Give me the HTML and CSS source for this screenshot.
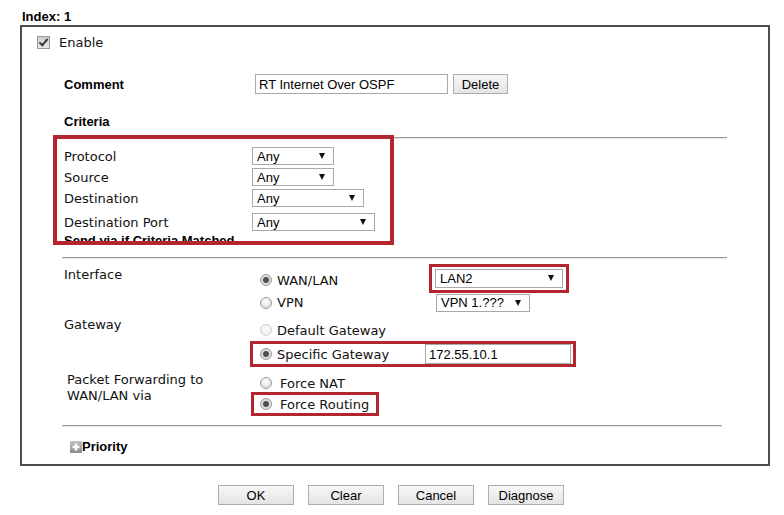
FILE: index.html
```html
<!DOCTYPE html>
<html lang="en">
<head>
    <meta charset="UTF-8">
    <title>Route Policy</title>
    <link rel="stylesheet" href="styles.css">
</head>
<body>
    <div class="title">Index: 1</div>
    <div class="panel">
        <label class="enable"><input type="checkbox" class="check" checked>Enable</label>

        <div class="comment">
            <span class="name">Comment</span>
            <input type="text" class="text" value="RT Internet Over OSPF">
            <button class="btn del">Delete</button>
        </div>

        <div class="heading">Criteria</div>
        <hr>
        <!-- criteria -->
        <div class="mark criteria">
            <span>Protocol</span>
            <span class="pick"><select class="w82"><option>Any</option></select></span>
            <span>Source</span>
            <span class="pick"><select class="w82"><option>Any</option></select></span>
            <span>Destination</span>
            <span class="pick"><select class="w112"><option>Any</option></select></span>
            <span>Destination Port</span>
            <span class="pick"><select class="w123"><option>Any</option></select></span>
        </div>
        <div class="heading sub">Send via if Criteria Matched</div>
        <hr>

        <!-- send via -->
        <div class="route">
            <span class="lbl-iface">Interface</span>
            <label class="opt o-wan"><input type="radio" class="radio" name="iface" checked>WAN/LAN</label>
            <span class="mark lan-box"><span class="pick"><select class="w128 tall"><option>LAN2</option></select></span></span>
            <label class="opt o-vpn"><input type="radio" class="radio" name="iface">VPN</label>
            <span class="pick vpn-pick"><select class="w94"><option>VPN 1.???</option></select></span>

            <span class="lbl-gw">Gateway</span>
            <label class="opt o-def"><input type="radio" class="radio" name="gw" disabled>Default Gateway</label>
            <div class="mark gw-box">
                <label class="opt"><input type="radio" class="radio" name="gw" checked>Specific Gateway</label>
                <input type="text" class="text gw-ip" value="172.55.10.1">
            </div>

            <span class="lbl-fwd">Packet Forwarding to<br>WAN/LAN via</span>
            <label class="opt wide o-nat"><input type="radio" class="radio" name="fwd">Force NAT</label>
            <div class="mark fwd-box">
                <label class="opt wide"><input type="radio" class="radio" name="fwd" checked>Force Routing</label>
            </div>
        </div>
        <hr>

        <div class="priority">
            <svg width="12" height="12" viewBox="0 0 12 12">
                <defs>
                    <linearGradient id="pg" x1="0" y1="0" x2="0" y2="1">
                        <stop offset="0" stop-color="#c4c4c4"/>
                        <stop offset="1" stop-color="#8c8c8c"/>
                    </linearGradient>
                </defs>
                <rect x="0" y="0" width="12" height="12" fill="url(#pg)"/>
                <path d="M6 2.5V9.5M2.5 6H9.5" stroke="#fff" stroke-width="2.4"/>
            </svg>Priority
        </div>
    </div>

    <div class="actions">
        <button class="btn">OK</button>
        <button class="btn">Clear</button>
        <button class="btn">Cancel</button>
        <button class="btn">Diagnose</button>
    </div>
</body>
</html>
```

FILE: styles.css
```css
body{
  margin: 0;
  font-family: "DejaVu Sans", Verdana, sans-serif;
  font-size: 13px;
  color: #111;
  background: #fff;
}
.title{
  height: 25px;
  box-sizing: border-box;
  padding: 9px 0 0 22px;
  font: bold 13px/15px "Liberation Sans", Arial, sans-serif;
  color: #000;
}
/* panel */
.panel{
  margin-left: 20px;
  width: 750px;
  box-sizing: border-box;
  border: 2px solid #4d4d4d;
  padding-bottom: 9px;
}
.enable{
  display: flex;
  align-items: center;
  height: 30px;
  padding-left: 15px;
}
.check{
  -webkit-appearance: none;
  appearance: none;
  position: relative;
  width: 13px;
  height: 13px;
  margin: 0 9px 0 0;
  box-sizing: border-box;
  border: 1px solid #9a9a9a;
  background: linear-gradient(#cfcfcf, #e9e9e9);
}
.check:checked::after{
  content: "";
  position: absolute;
  left: 3px;
  top: 0px;
  width: 3px;
  height: 7px;
  border: solid #3c3c3c;
  border-width: 0 2px 2px 0;
  transform: rotate(40deg);
}
.comment{
  display: flex;
  align-items: center;
  height: 20px;
  margin: 17px 0 0 42px;
}
.name{
  width: 191px;
  font: bold 13px "Liberation Sans", Arial, sans-serif;
  color: #000;
}
.text{
  box-sizing: border-box;
  height: 20px;
  width: 193px;
  margin: 0;
  padding: 0 3px;
  border: 1px solid #a9a9a9;
  font: 13px "Liberation Sans", Arial, sans-serif;
  color: #000;
  outline: none;
}
.btn{
  box-sizing: border-box;
  height: 20px;
  margin: 0;
  padding: 0 6px;
  border: 1px solid #adadad;
  background: linear-gradient(#f7f7f7, #e4e4e4);
  font: 13px "Liberation Sans", Arial, sans-serif;
  color: #000;
}
.del{
  width: 55px;
  margin-left: 5px;
}
.heading{
  margin: 18px 0 0 42px;
  font: bold 13px/20px "Liberation Sans", Arial, sans-serif;
  color: #000;
}
hr{
  margin: 5px 0 0 40px;
  width: 665px;
  height: 0;
  border: 0;
  border-top: 1px solid #9a9a9a;
  border-bottom: 1px solid #e8e8e8;
}
.sub + hr{
  margin-top: 8px;
}
.route + hr{
  margin-top: 9px;
  width: 660px;
}
/* red highlight frames */
.mark{
  border: 3px solid #b3262f;
}
.criteria{
  position: relative;
  z-index: 1;
  margin: -4px 0 0 31px;
  width: 341px;
  box-sizing: border-box;
  border-width: 4px;
  padding: 6px 0 6px 7px;
  display: grid;
  grid-template-columns: 188px auto;
  grid-template-rows: 22px 20px 22px 26px;
  align-items: center;
}
.sub{
  margin-top: -12px;
  line-height: 16px;
}
/* select */
.pick{
  position: relative;
  display: inline-block;
  justify-self: start;
  line-height: 0;
}
.pick select{
  -webkit-appearance: none;
  appearance: none;
  box-sizing: border-box;
  height: 18px;
  margin: 0;
  padding: 0 0 0 4px;
  border: 1px solid #a9a9a9;
  border-radius: 0;
  background: #fff;
  font: 13px "Liberation Sans", Arial, sans-serif;
  color: #000;
  outline: none;
}
.pick::after{
  content: "";
  position: absolute;
  right: 9px;
  top: 6px;
  border-left: 3.5px solid transparent;
  border-right: 3.5px solid transparent;
  border-top: 6px solid #111;
  pointer-events: none;
}
.pick select.tall{
  height: 19px;
}
.w82{ width: 82px; }
.w94{ width: 94px; }
.w112{ width: 112px; }
.w123{ width: 123px; }
.w128{ width: 128px; }
/* send via */
.route{
  margin-left: 42px;
  padding-top: 5px;
  display: grid;
  grid-template-columns: 186px 179px auto;
  grid-template-rows: 29px 19px 27px 28px 25px 24px;
}
.opt{
  display: flex;
  align-items: center;
  height: 18px;
  padding-left: 10px;
  white-space: nowrap;
}
.radio{
  -webkit-appearance: none;
  appearance: none;
  width: 12px;
  height: 12px;
  margin: 0 5px 0 0;
  box-sizing: border-box;
  border-radius: 50%;
  border: 1px solid #9c9c9c;
  background: radial-gradient(circle at 50% 35%, #fdfdfd, #d4d4d4);
}
.radio:checked{
  background: radial-gradient(circle, #4f4f4f 0 2.4px, #8c8c8c 3px, #e4e4e4 3.6px, #cfcfcf 6px);
}
.radio:disabled{
  border-color: #cdcdcd;
  background: radial-gradient(circle at 50% 35%, #fafafa, #ececec);
}
.wide .radio{
  margin-right: 8px;
}
.lbl-iface{
  grid-row: 1 / 3;
  grid-column: 1;
  margin-top: 3px;
  line-height: 16px;
}
.o-wan{
  grid-row: 1;
  grid-column: 2;
  align-self: center;
  margin-top: 3px;
}
.lan-box{
  grid-row: 1;
  grid-column: 3;
  justify-self: start;
  padding: 2px 3px;
}
.o-vpn{
  grid-row: 2;
  grid-column: 2;
  align-self: center;
}
.vpn-pick{
  grid-row: 2;
  grid-column: 3;
  align-self: center;
  margin-left: 7px;
}
.lbl-gw{
  grid-row: 3;
  grid-column: 1;
  margin-top: 5px;
  line-height: 16px;
}
.o-def{
  grid-row: 3;
  grid-column: 2;
  align-self: end;
}
.gw-box{
  grid-row: 4;
  grid-column: 2 / 4;
  align-self: end;
  justify-self: start;
  display: flex;
  align-items: center;
  width: 326px;
  height: 26px;
  box-sizing: border-box;
  padding: 0 2px 0 7px;
}
.gw-box .opt{
  padding-left: 0;
}
.gw-ip{
  width: 146px;
  margin-left: auto;
}
.lbl-fwd{
  grid-row: 5 / 7;
  grid-column: 1;
  margin-top: 5px;
  padding-left: 3px;
  line-height: 16px;
}
.o-nat{
  grid-row: 5;
  grid-column: 2;
  align-self: end;
}
.fwd-box{
  grid-row: 6;
  grid-column: 2;
  justify-self: start;
  margin-left: 1px;
  padding: 0 7px 0 6px;
}
.fwd-box .opt{
  padding-left: 0;
}
.priority{
  display: flex;
  align-items: center;
  margin: 12px 0 0 48px;
  font: bold 13px/16px "Liberation Sans", Arial, sans-serif;
  color: #000;
}
/* buttons */
.actions{
  display: flex;
  justify-content: center;
  gap: 14px;
  margin-top: 19px;
  padding-right: 2px;
}
.actions .btn{
  width: 76px;
}
```
